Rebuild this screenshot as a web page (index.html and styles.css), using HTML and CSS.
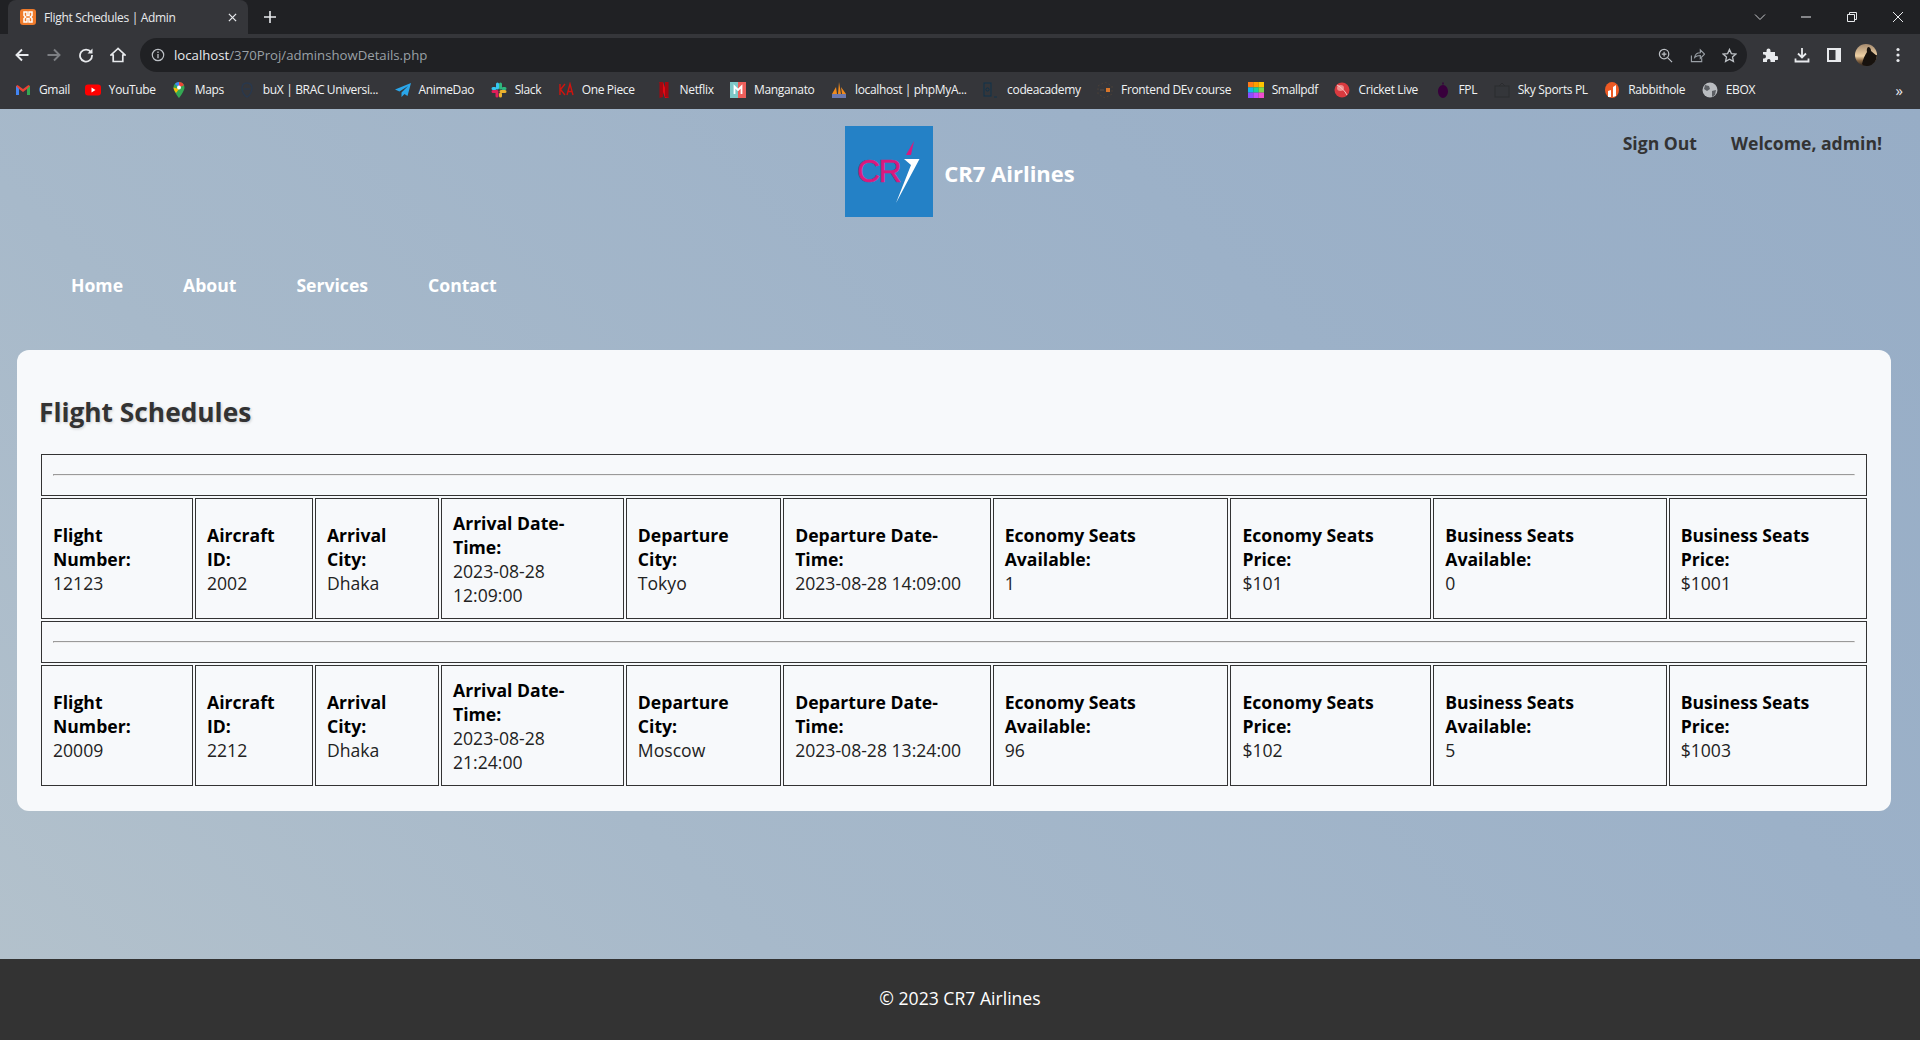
FILE: index.html
```html
<!DOCTYPE html>
<html lang="en">
<head>
<meta charset="utf-8">
<title>Flight Schedules | Admin</title>
<link rel="stylesheet" href="styles.css">
</head>
<body>
<div class="browser">
  <div class="tabstrip">
    <div class="tab">
      <svg class="fav" viewBox="0 0 16 16"><rect width="16" height="16" rx="3" fill="#ee7a2b"/><path d="M4 3h3v3.5H9V3h3v3.5L10.500 8 12 9.500V13H9V9.500H7V13H4V9.500L5.500 8 4 6.500z" fill="none" stroke="#fff" stroke-width="1.5"/></svg>
      <span class="tab-title">Flight Schedules | Admin</span>
      <svg class="tab-x" viewBox="0 0 10 10"><path d="M1 1l8 8M9 1l-8 8" stroke="#e8eaed" stroke-width="1.4"/></svg>
    </div>
    <svg class="newtab" viewBox="0 0 12 12"><path d="M6 0v12M0 6h12" stroke="#e8eaed" stroke-width="1.6"/></svg>
    <div class="winctl">
      <svg class="wc" viewBox="0 0 12 12"><path d="M1 3.500l5 5 5-5" fill="none" stroke="#c8cace"/></svg>
      <svg class="wc" viewBox="0 0 12 12"><path d="M1 6h10" stroke="#e8eaed"/></svg>
      <svg class="wc" viewBox="0 0 12 12"><path d="M1.500 3.500h7v7h-7zM3.500 3.500v-2h7v7h-2" fill="none" stroke="#e8eaed"/></svg>
      <svg class="wc" viewBox="0 0 12 12"><path d="M1 1l10 10M11 1L1 11" stroke="#e8eaed"/></svg>
    </div>
  </div>
  <div class="toolbar">
    <svg class="tb" viewBox="0 0 16 16"><path d="M14.500 8H2.500M8 2.500L2.500 8 8 13.500" fill="none" stroke="#e8eaed" stroke-width="1.9"/></svg>
    <svg class="tb" viewBox="0 0 16 16"><path d="M1.500 8h12M8 2.500L13.500 8 8 13.500" fill="none" stroke="#7d7f83" stroke-width="1.9"/></svg>
    <svg class="tb" viewBox="0 0 16 16"><path d="M13 5.200A6 6 0 1 0 14 8" fill="none" stroke="#e8eaed" stroke-width="1.8"/><path d="M14.500 1.500v5h-5z" fill="#e8eaed"/></svg>
    <svg class="tb" viewBox="0 0 16 16"><path d="M8 1.500L1 8h2.200v6.500h9.600V8H15z" fill="none" stroke="#e8eaed" stroke-width="1.7"/></svg>
    <div class="omnibox">
      <svg class="omni-info" viewBox="0 0 14 14"><circle cx="7" cy="7" r="5.700" fill="none" stroke="#bdc1c6" stroke-width="1.2"/><path d="M7 6v4.200M7 3.600v1.400" stroke="#bdc1c6" stroke-width="1.3"/></svg>
      <span class="url"><span class="url-host">localhost</span>/370Proj/adminshowDetails.php</span>
      <div class="omni-right">
        <svg class="oi" viewBox="0 0 16 16"><circle cx="6.500" cy="6.500" r="5" fill="none" stroke="#bdc1c6" stroke-width="1.3"/><path d="M10.200 10.200L15 15M4 6.500h5M6.500 4v5" stroke="#bdc1c6" stroke-width="1.3"/></svg>
        <svg class="oi" viewBox="0 0 16 16"><path d="M1.500 8v6.500h11V11M5 10c.5-3.500 3-5 6-5V2l4.500 4.500L11 11V8c-2.500 0-4.500.5-6 2z" fill="none" stroke="#9aa0a6" stroke-width="1.2"/></svg>
        <svg class="oi" viewBox="0 0 16 16"><path d="M8 1.500l2 4.400 4.800.5-3.600 3.200 1 4.700L8 11.900l-4.200 2.400 1-4.700L1.200 6.400 6 5.900z" fill="none" stroke="#bdc1c6" stroke-width="1.4"/></svg>
      </div>
    </div>
    <div class="tools">
      <svg class="tl" viewBox="0 0 16 16"><path d="M1 5h3.500V3.500a2 2 0 0 1 4 0V5H13v4h1.500a2 2 0 0 1 0 4H13v2H8.500v-1.500a1.800 1.800 0 0 0-3.500 0V15H1v-3.500h1a2 2 0 0 0 0-4H1z" fill="#e8eaed"/></svg>
      <svg class="tl" viewBox="0 0 16 16"><path d="M8 1v9M4 6.500L8 10.500l4-4M1.500 11.500v3h13v-3" fill="none" stroke="#e8eaed" stroke-width="1.8"/></svg>
      <svg class="tl" viewBox="0 0 16 16"><path d="M2 2h12v12H2z" fill="none" stroke="#e8eaed" stroke-width="2"/><path d="M9.500 2H14v12H9.500z" fill="#e8eaed"/></svg>
      <svg class="avatar" viewBox="0 0 22 22"><defs><linearGradient id="sky" x1="0" y1="0" x2="0" y2="1"><stop offset="0" stop-color="#a58a6e"/><stop offset=".55" stop-color="#efd2a6"/><stop offset=".75" stop-color="#8a6a48"/><stop offset="1" stop-color="#2a2018"/></linearGradient></defs><circle cx="11" cy="11" r="11" fill="url(#sky)"/><path d="M13 3c2 0 3 2 3 4 3 2 5 5 6 4a11 11 0 0 1-9 11c-4 0-5-1-6-2 1-5 3-9 5-12-.5-2 0-4 1-5z" fill="#17120e"/></svg>
      <svg class="tl menu" viewBox="0 0 16 16"><circle cx="8" cy="2.500" r="1.600" fill="#e8eaed"/><circle cx="8" cy="8" r="1.600" fill="#e8eaed"/><circle cx="8" cy="13.500" r="1.600" fill="#e8eaed"/></svg>
    </div>
  </div>
  <div class="bookmarks">
    <div class="bm bm-tight"><svg class="bi" viewBox="0 0 16 16"><path d="M1 4v9h3V7l4 3 4-3v6h3V4l-1.500-1L8 7 2.500 3z" fill="#e94235"/><path d="M1 4v9h3V7z" fill="#4285f4"/><path d="M15 4v9h-3V7z" fill="#34a853"/></svg><span>Gmail</span></div>
    <div class="bm bm-tight"><svg class="bi" viewBox="0 0 16 16"><rect y="2.500" width="16" height="11" rx="3" fill="#f00"/><path d="M6.500 5.500v5l4-2.500z" fill="#fff"/></svg><span>YouTube</span></div>
    <div class="bm bm-tight"><svg class="bi" viewBox="0 0 16 16"><path d="M8 0a5.500 5.500 0 0 0-5.500 5.500C2.500 9.500 8 16 8 16s5.500-6.500 5.500-10.500A5.500 5.500 0 0 0 8 0z" fill="#34a853"/><path d="M8 0a5.500 5.500 0 0 0-4.200 2L8 5.500z" fill="#4285f4"/><path d="M8 0a5.500 5.500 0 0 1 5 3.200L8 5.500z" fill="#ea4335"/><path d="M2.500 5.500c0 2 1.500 4 2.500 5.500L8 7z" fill="#fbbc04"/><circle cx="8" cy="5.500" r="2" fill="#fff"/></svg><span>Maps</span></div>
    <div class="bm"><svg class="bi" viewBox="0 0 16 16"><path d="M8 1c3.500 0 5 2.500 5 5.500S10.500 14 8 15C5.500 14 3 10 3 6.500S4.500 1 8 1z" fill="none" stroke="#29384d" stroke-width="1.400"/><path d="M5 7h6" stroke="#29384d" stroke-width="1.400"/></svg><span>buX | BRAC Universi...</span></div>
    <div class="bm"><svg class="bi" viewBox="0 0 16 16"><path d="M16 1L0 7.500l4.500 2L13 4 6.500 10.500V15l3-3 3 2z" fill="#2aa6ea"/></svg><span>AnimeDao</span></div>
    <div class="bm"><svg class="bi" viewBox="0 0 16 16"><path d="M2 9.500h4M6 11v3" stroke="#e01e5a" stroke-width="3" stroke-linecap="round"/><path d="M6.500 2v4M2 6.500h2" stroke="#36c5f0" stroke-width="3" stroke-linecap="round"/><path d="M9.500 2v4M12 6.500h2" stroke="#2eb67d" stroke-width="3" stroke-linecap="round"/><path d="M10 9.500h4M9.500 12v2" stroke="#ecb22e" stroke-width="3" stroke-linecap="round"/></svg><span>Slack</span></div>
    <div class="bm bm-wide"><svg class="bi" viewBox="0 0 16 16"><path d="M2 2v11M7 2L2.500 7.500 7 13M9 13l3-11 3 11M10 9.500h4" fill="none" stroke="#d0140f" stroke-width="1.400"/></svg><span>One Piece</span></div>
    <div class="bm"><svg class="bi" viewBox="0 0 16 16"><path d="M3.500 0H7l5.500 16H9L3.500 0z" fill="#e50914"/><path d="M3.500 0H7v15l-3.500 1zM9 0h3.500v16L9 15z" fill="#a50710"/></svg><span>Netflix</span></div>
    <div class="bm"><svg class="bi" viewBox="0 0 16 16"><rect width="8" height="16" fill="#7dc8c8"/><rect x="8" width="8" height="16" fill="#ee5f5b"/><path d="M4.500 12V4.500L8 8l3.500-3.500V12" fill="none" stroke="#fff" stroke-width="1.800"/></svg><span>Manganato</span></div>
    <div class="bm"><svg class="bi" viewBox="0 0 16 16"><path d="M1 12L5 5l1 7zM7 12l1-12 2 12zM11 12l-1-7 5 7z" fill="#f08a1d"/><rect x="1" y="12" width="14" height="4" fill="#6c78af"/></svg><span>localhost | phpMyA...</span></div>
    <div class="bm"><svg class="bi" viewBox="0 0 16 16"><rect x="1" y="1" width="7" height="13" fill="none" stroke="#10324a"/><circle cx="4.500" cy="7.500" r="1.600" fill="none" stroke="#10324a"/><path d="M11 15h3" stroke="#10324a"/></svg><span>codeacademy</span></div>
    <div class="bm"><svg class="bi" viewBox="0 0 16 16"><path d="M8 0L15 4v8l-7 4-7-4V4z" fill="none" stroke="#4a4038" stroke-dasharray="2 2"/><path d="M9 6h4v4H9z" fill="#d9762a"/><path d="M3 8h4" stroke="#5c5148"/></svg><span>Frontend DEv course</span></div>
    <div class="bm"><svg class="bi" viewBox="0 0 16 16"><rect width="5.400" height="5.400" fill="#ff7a18"/><rect x="5.300" width="5.400" height="5.400" fill="#ff9c00"/><rect x="10.600" width="5.400" height="5.400" fill="#ffc400"/><rect y="5.300" width="5.400" height="5.400" fill="#12b5ea"/><rect x="5.300" y="5.300" width="5.400" height="5.400" fill="#19d19a"/><rect x="10.600" y="5.300" width="5.400" height="5.400" fill="#7bd84a"/><rect y="10.600" width="5.400" height="5.400" fill="#8a4dff"/><rect x="5.300" y="10.600" width="5.400" height="5.400" fill="#c04dff"/><rect x="10.600" y="10.600" width="5.400" height="5.400" fill="#ef4dcf"/></svg><span>Smallpdf</span></div>
    <div class="bm"><svg class="bi" viewBox="0 0 16 16"><circle cx="8" cy="8" r="7.500" fill="#d93a3f"/><ellipse cx="6.500" cy="6" rx="3.500" ry="3" fill="#f0908f"/><path d="M3 3c4 2 8 6 10 10" fill="none" stroke="#f4c6c4"/></svg><span>Cricket Live</span></div>
    <div class="bm"><svg class="bi" viewBox="0 0 16 16"><path d="M8 0c1 1 1 2 0 3 3 0 5 3 5 6.500S10.500 16 8 16 3 13 3 9.500 5 3 8 3c-1-1-1-2 0-3z" fill="#38003c"/></svg><span>FPL</span></div>
    <div class="bm"><svg class="bi" viewBox="0 0 16 16"><rect x="1" y="4" width="14" height="11" fill="#34363a" stroke="#2b2c2f"/><path d="M5 4l3-3 3 3" fill="none" stroke="#2b2c2f"/></svg><span>Sky Sports PL</span></div>
    <div class="bm"><svg class="bi" viewBox="0 0 16 16"><ellipse cx="8" cy="8" rx="7" ry="8" fill="#ee5a24"/><path d="M4 15V9l3-1v7M9 15V5l3-2v11" fill="#fff"/></svg><span>Rabbithole</span></div>
    <div class="bm"><svg class="bi" viewBox="0 0 16 16"><circle cx="8" cy="8" r="7.500" fill="#b9bcc0"/><path d="M3 3l4 1 1 3-3 2-3-2zM10 9l4-1-1 5-3 2z" fill="#5c5f64"/></svg><span>EBOX</span></div>
    <span class="bm-more">»</span>
  </div>
</div>
<div class="page">
  <header class="site-header">
    <div class="header-spacer"></div>
    <div class="brand">
      <svg class="logo" viewBox="0 0 88 91">
        <rect width="88" height="91" fill="#2481c6"/>
        <text class="logo-text" x="12" y="56">CR</text>
        <path d="M69 15L61 29h5z" fill="#d9197d"/>
        <path d="M59 33h15.500L51 77l15-38z" fill="#fff"/>
      </svg>
      <span class="brand-name">CR7 Airlines</span>
    </div>
    <div class="user-links"><a class="user-link">Sign Out</a><span class="user-link">Welcome, admin!</span></div>
  </header>
  <nav class="site-nav">
    <a class="nav-link">Home</a><a class="nav-link">About</a><a class="nav-link">Services</a><a class="nav-link">Contact</a>
  </nav>
  <main class="card">
    <h2 class="card-title">Flight Schedules</h2>
    <table class="flights">
      <tbody>
        <tr><td colspan="10"><hr class="rule"></td></tr>
        <tr>
          <td class="first"><strong>Flight Number:</strong> 12123</td>
          <td><strong>Aircraft ID:</strong> 2002</td>
          <td><strong>Arrival City:</strong> Dhaka</td>
          <td><strong>Arrival Date-Time:</strong> 2023-08-28 12:09:00</td>
          <td><strong>Departure City:</strong> Tokyo</td>
          <td><strong>Departure Date-Time:</strong> 2023-08-28 14:09:00</td>
          <td><strong>Economy Seats Available:</strong> 1</td>
          <td><strong>Economy Seats Price:</strong> $101</td>
          <td><strong>Business Seats Available:</strong> 0</td>
          <td><strong>Business Seats Price:</strong> $1001</td>
        </tr>
        <tr><td colspan="10"><hr class="rule"></td></tr>
        <tr>
          <td class="first"><strong>Flight Number:</strong> 20009</td>
          <td><strong>Aircraft ID:</strong> 2212</td>
          <td><strong>Arrival City:</strong> Dhaka</td>
          <td><strong>Arrival Date-Time:</strong> 2023-08-28 21:24:00</td>
          <td><strong>Departure City:</strong> Moscow</td>
          <td><strong>Departure Date-Time:</strong> 2023-08-28 13:24:00</td>
          <td><strong>Economy Seats Available:</strong> 96</td>
          <td><strong>Economy Seats Price:</strong> $102</td>
          <td><strong>Business Seats Available:</strong> 5</td>
          <td><strong>Business Seats Price:</strong> $1003</td>
        </tr>
      </tbody>
    </table>
  </main>
  <footer class="site-footer">© 2023 CR7 Airlines</footer>
</div>
</body>
</html>
```

FILE: styles.css
```css
* { box-sizing: border-box; }
html, body { margin: 0; height: 100%; }
body {
  display: flex;
  flex-direction: column;
  height: 1040px;
  overflow: hidden;
  font-family: "Open Sans", sans-serif;
  background: #202124;
}
svg { display: block; flex: none; }

/* browser chrome */
.browser { flex: none; height: 109px; background: #35363a; color: #e8eaed; }
.tabstrip { height: 34px; background: #202124; display: flex; align-items: flex-end; padding-left: 8px; }
.tab { width: 240px; height: 34px; background: #35363a; border-radius: 8px 8px 0 0; display: flex; align-items: center; padding: 0 12px; }
.fav { width: 16px; height: 16px; margin-right: 8px; }
.tab-title { font-size: 12px; letter-spacing: -.33px; flex: 1; white-space: nowrap; }
.tab-x { width: 9px; height: 9px; margin-right: -1px; }
.newtab { width: 12px; height: 12px; margin: 0 0 11px 16px; }
.winctl { margin-left: auto; height: 34px; display: flex; align-items: center; gap: 34px; padding-right: 16px; }
.wc { width: 12px; height: 12px; }
.toolbar { height: 38px; display: flex; align-items: center; padding: 4px 0 0 14px; }
.tb { width: 16px; height: 16px; margin-right: 16px; }
.omnibox { flex: none; width: 1607px; margin-left: -2px; height: 34px; background: #202124; border-radius: 17px; display: flex; align-items: center; padding: 0 10px; }
.omni-info { width: 14px; height: 14px; margin: 0 9px 0 1px; }
.url { font-size: 13.2px; color: #9aa0a6; white-space: nowrap; }
.url-host { color: #e8eaed; }
.omni-right { margin-left: auto; display: flex; gap: 17px; }
.oi { width: 15px; height: 15px; }
.tools { display: flex; align-items: center; margin-left: 15px; }
.tl { width: 16px; height: 16px; margin-right: 16px; }
.avatar { width: 22px; height: 22px; margin: 0 13px 0 -3px; }
.menu { margin-right: 0; }
.bookmarks { height: 37px; display: flex; align-items: center; padding: 0 0 2px 15px; }
.bm { display: flex; align-items: center; gap: 8px; font-size: 12px; letter-spacing: -.35px; color: #f1f3f4; white-space: nowrap; margin-right: 16.5px; }
.bm-tight { margin-right: 15px; }
.bm-wide { margin-right: 21px; }
.bi { width: 16px; height: 16px; }
.bm-more { margin-left: auto; margin-right: 17px; font-size: 15px; color: #e8eaed; }

/* page */
.page {
  flex: 1;
  display: flex;
  flex-direction: column;
  min-height: 0;
  background: linear-gradient(45deg, #b4c2cc 0%, #a7b9ca 30%, #9cb1c8 70%, #97adc6 100%);
}
.site-header {
  display: grid;
  grid-template-columns: 1fr auto 1fr;
  align-items: start;
  padding-top: 17px;
}
.brand { display: flex; align-items: center; gap: 11px; }
.logo { width: 88px; height: 91px; }
.logo-text { font-family: "Liberation Sans", sans-serif; font-size: 32px; letter-spacing: -1.5px; fill: #d9197d; stroke: #d9197d; stroke-width: .5px; }
.brand-name { color: #fff; font-size: 22px; font-weight: 700; padding-top: 3px; }
.user-links { display: flex; justify-content: flex-end; gap: 34px; padding: 5px 38px 0 0; }
.user-link { font-size: 17.6px; font-weight: 700; color: #333; }
.site-nav { display: flex; gap: 60px; padding: 56px 0 0 71px; }
.nav-link { color: #fff; font-size: 17.6px; font-weight: 700; }
.card {
  margin: 53px 29px 0 17px;
  padding: 22px 22px 23px;
  background: #f7f9fb;
  border-radius: 12px;
}
.card-title {
  margin: 23px 0 22px;
  font-size: 26.3px;
  line-height: 35px;
  font-weight: 700;
  color: #333;
  text-shadow: 1px 1px 3px rgba(0,0,0,.18);
}
.flights {
  width: 100%;
  border-collapse: separate;
  border-spacing: 2px;
  font-size: 17.6px;
  color: #222;
}
.flights td { border: 1px solid #333; padding: 11.5px 11px; }
.flights .first { width: 152px; }
.flights strong { color: #000; display: block; font-weight: 700; }
.rule { margin: 7.5px 0; }
.site-footer {
  margin-top: auto;
  height: 81px;
  flex: none;
  padding-bottom: 4px;
  background: #333;
  color: #fff;
  font-size: 17.6px;
  display: flex;
  align-items: center;
  justify-content: center;
}
```
